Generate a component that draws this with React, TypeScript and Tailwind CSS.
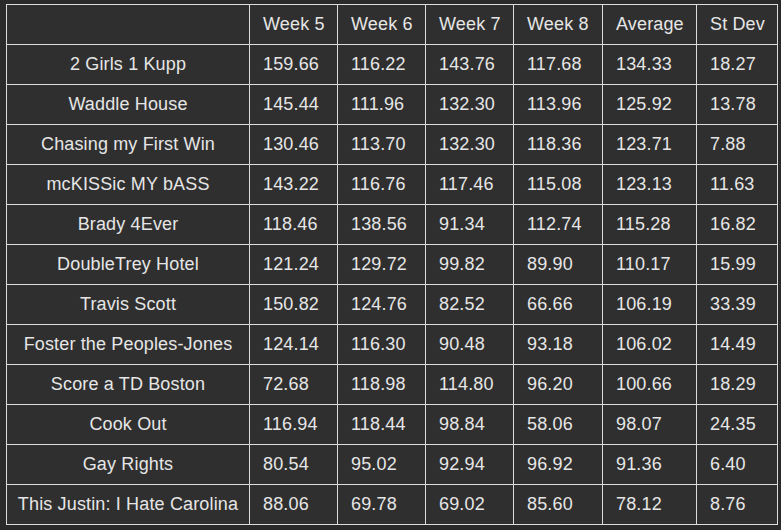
const rows: [string, string, string, string, string, string, string][] = [
  ['2 Girls 1 Kupp', '159.66', '116.22', '143.76', '117.68', '134.33', '18.27'],
  ['Waddle House', '145.44', '111.96', '132.30', '113.96', '125.92', '13.78'],
  ['Chasing my First Win', '130.46', '113.70', '132.30', '118.36', '123.71', '7.88'],
  ['mcKISSic MY bASS', '143.22', '116.76', '117.46', '115.08', '123.13', '11.63'],
  ['Brady 4Ever', '118.46', '138.56', '91.34', '112.74', '115.28', '16.82'],
  ['DoubleTrey Hotel', '121.24', '129.72', '99.82', '89.90', '110.17', '15.99'],
  ['Travis Scott', '150.82', '124.76', '82.52', '66.66', '106.19', '33.39'],
  ['Foster the Peoples-Jones', '124.14', '116.30', '90.48', '93.18', '106.02', '14.49'],
  ['Score a TD Boston', '72.68', '118.98', '114.80', '96.20', '100.66', '18.29'],
  ['Cook Out', '116.94', '118.44', '98.84', '58.06', '98.07', '24.35'],
  ['Gay Rights', '80.54', '95.02', '92.94', '96.92', '91.36', '6.40'],
  ['This Justin: I Hate Carolina', '88.06', '69.78', '69.02', '85.60', '78.12', '8.76'],
];

const headers = ['Week 5', 'Week 6', 'Week 7', 'Week 8', 'Average', 'St Dev'];

export default function App() {
  return (
    <main className="min-h-screen w-full bg-[#2a2a2a] pl-[6px] pt-[4px] font-['Liberation_Sans',Arial,sans-serif] text-[18px] tracking-[0.15px] text-[#e6e6e6]">
      <table className="table-fixed border-collapse bg-[#2f2f2f] w-[771px] whitespace-nowrap">
        <colgroup>
          <col className="w-[243px]" />
          <col className="w-[88px]" />
          <col className="w-[88px]" />
          <col className="w-[88px]" />
          <col className="w-[89px]" />
          <col className="w-[94px]" />
          <col className="w-[81px]" />
        </colgroup>
        <thead>
          <tr className="h-[40px]">
            <th className="border border-[#dcdcdc] p-0 font-normal"></th>
            {headers.map((h) => (
              <th key={h} className="border border-[#dcdcdc] py-0 pl-[13px] pr-0 text-left font-normal">
                {h}
              </th>
            ))}
          </tr>
        </thead>
        <tbody>
          {rows.map((r) => (
            <tr key={r[0]} className="h-[40px]">
              <td className="border border-[#dcdcdc] p-0 text-center">{r[0]}</td>
              {r.slice(1).map((v, i) => (
                <td key={i} className="border border-[#dcdcdc] py-0 pl-[13px] pr-0 text-left">
                  {v}
                </td>
              ))}
            </tr>
          ))}
        </tbody>
      </table>
    </main>
  );
}
